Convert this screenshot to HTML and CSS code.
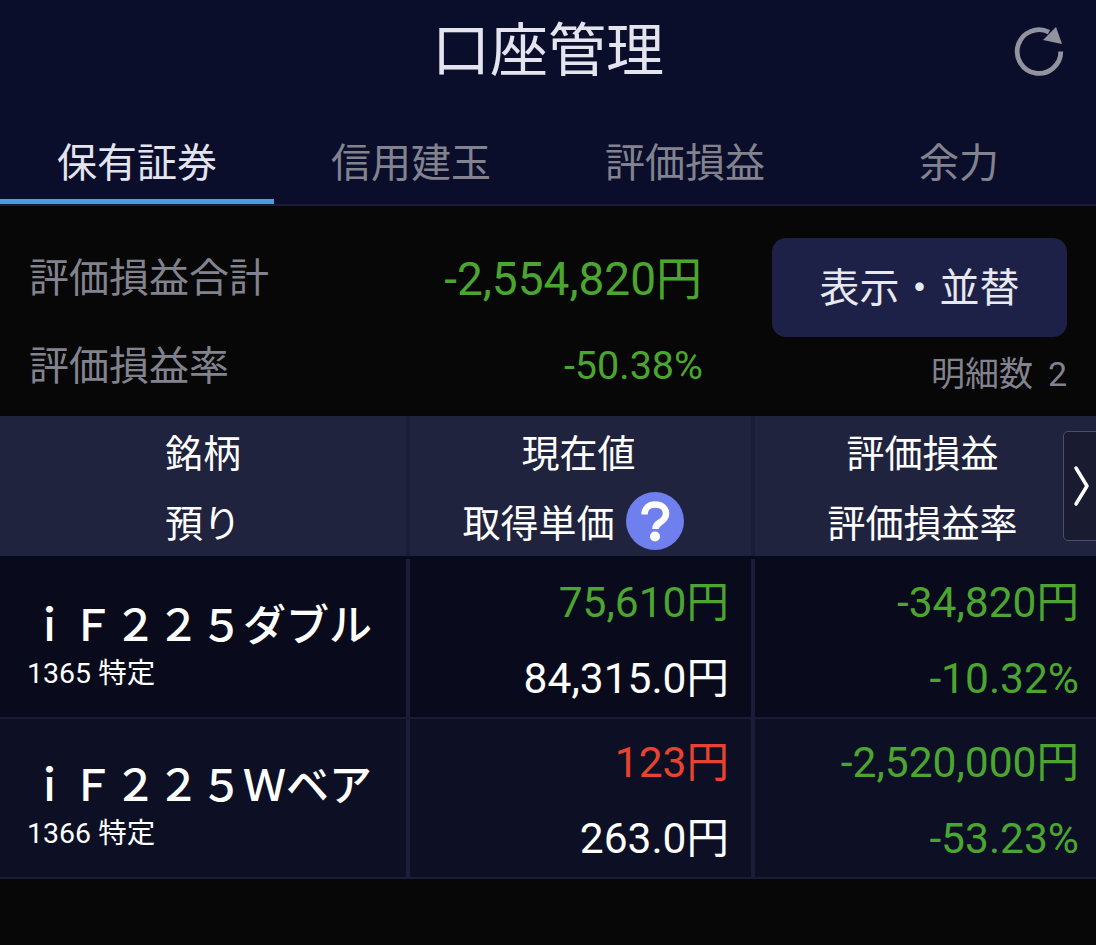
FILE: index.html
```html
<!DOCTYPE html>
<html lang="ja">

<head>
    <meta charset="UTF-8">
    <meta name="viewport" content="width=device-width, initial-scale=1.0">
    <title>口座管理</title>
    <link rel="stylesheet" href="styles.css">
</head>

<body>
    <!-- Header -->
    <header class="header">
        <h1 class="title">口座管理</h1>
        <svg class="reload" width="52" height="52" viewBox="0 0 52 52">
            <path d="M48.800 26.500A21.800 21.800 0 1 1 37 7.200" fill="none" stroke="#93939f" stroke-width="4.800" />
            <path d="M44 2L50 19L31 15Z" fill="#93939f" />
        </svg>
    </header>

    <!-- Tabs -->
    <nav class="tabs">
        <div class="tab active">保有証券</div>
        <div class="tab">信用建玉</div>
        <div class="tab">評価損益</div>
        <div class="tab">余力</div>
    </nav>

    <!-- Summary -->
    <section class="summary">
        <div class="totals">
            <div class="total-row">
                <span class="total-label">評価損益合計</span>
                <span class="total-value green">-2,554,820円</span>
            </div>
            <div class="total-row rate">
                <span class="total-label">評価損益率</span>
                <span class="total-rate green">-50.38%</span>
            </div>
        </div>
        <div class="actions">
            <button class="sort-button">表示・並替</button>
            <div class="count">明細数<span class="count-num">2</span></div>
        </div>
    </section>

    <!-- Table -->
    <div class="table-head">
        <div class="head-cell col-name">
            <div>銘柄</div>
            <div>預り</div>
        </div>
        <div class="head-cell col-price">
            <div class="price-label">現在値</div>
            <div class="with-help">取得単価
                <svg class="help" width="58" height="58" viewBox="0 0 58 58">
                    <circle cx="29" cy="29" r="29" fill="#6f80ee" />
                    <path d="M18.500 22.500C18.500 16 23 12.500 29 12.500C35.500 12.500 40 16 40 21.500C40 26 37.500 28 34.500 30C31.500 32 29.500 33 29.500 37" fill="none" stroke="#fff" stroke-width="6.500" />
                    <circle cx="29" cy="44.500" r="5" fill="#fff" />
                </svg>
            </div>
        </div>
        <div class="head-cell col-profit">
            <div>評価損益</div>
            <div>評価損益率</div>
        </div>
        <div class="next-tab">
            <svg width="18" height="42" viewBox="0 0 18 42">
                <path d="M4 3L15 21L4 39" fill="none" stroke="#fff" stroke-width="3.500" stroke-linecap="round" stroke-linejoin="round" />
            </svg>
        </div>
    </div>

    <div class="row first">
        <div class="col-name name-cell">
            <div class="stock-name">ｉＦ２２５ダブル</div>
            <div class="stock-code">1365 特定</div>
        </div>
        <div class="col-price num-cell">
            <div class="green">75,610円</div>
            <div>84,315.0円</div>
        </div>
        <div class="col-profit num-cell">
            <div class="green">-34,820円</div>
            <div class="green">-10.32%</div>
        </div>
    </div>

    <div class="row">
        <div class="col-name name-cell">
            <div class="stock-name">ｉＦ２２５Ｗベア</div>
            <div class="stock-code">1366 特定</div>
        </div>
        <div class="col-price num-cell">
            <div class="red">123円</div>
            <div>263.0円</div>
        </div>
        <div class="col-profit num-cell">
            <div class="green">-2,520,000円</div>
            <div class="green">-53.23%</div>
        </div>
    </div>
</body>

</html>
```

FILE: styles.css
```css
* {
    box-sizing: border-box;
}

html,
body {
    margin: 0;
    height: 945px;
    overflow: hidden;
}

body {
    background-color: #070707;
    color: #fff;
    font-family: Roboto, "Noto Sans CJK JP", sans-serif;
}

.green {
    color: #4ba62f;
}

.red {
    color: #e8432f;
}

/* Header */
.header {
    height: 125px;
    background-color: #0b0e2a;
    display: flex;
    align-items: center;
    justify-content: center;
    position: relative;
}

.title {
    margin: 0 0 34px;
    font-size: 58px;
    font-weight: 400;
    color: #e4e4ee;
}

.reload {
    position: absolute;
    top: 25px;
    right: 32px;
}

/* Tabs */
.tabs {
    height: 81px;
    background-color: #0b0e2a;
    border-bottom: 2px solid #1a1c38;
    display: flex;
}

.tab {
    flex: 1;
    font-size: 40px;
    color: #82838f;
    text-align: center;
    padding-top: 10px;
    line-height: 58px;
}

.tab.active {
    color: #e4e4ee;
    height: 79px;
    border-bottom: 5px solid #4a9de2;
}

/* Summary */
.summary {
    height: 210px;
    display: flex;
    padding: 32px 29px 0 29px;
    justify-content: space-between;
}

.totals {
    width: 673px;
}

.total-row {
    display: flex;
    justify-content: space-between;
    align-items: center;
    height: 74px;
    color: #82838f;
    font-size: 40px;
}

.total-row.rate {
    height: 102px;
}

.total-value {
    font-size: 46px;
}

.total-rate {
    margin: 4px -1px 0 0;
    font-size: 39.5px;
}

.actions {
    width: 295px;
    text-align: right;
}

.sort-button {
    display: block;
    width: 100%;
    height: 99px;
    border: none;
    border-radius: 14px;
    padding: 0 0 6px;
    background-color: #1e2147;
    color: #e8e8f0;
    font-family: inherit;
    font-size: 40px;
}

.count {
    margin-top: 10px;
    font-size: 34px;
    color: #82838f;
}

.count-num {
    margin-left: 15px;
}

/* Table */
.table-head,
.row {
    display: flex;
}

.table-head {
    height: 140px;
    background-color: #20233d;
    position: relative;
}

.col-name {
    width: 410px;
    border-right: 4px solid #1a1c38;
}

.col-price {
    width: 345px;
    border-right: 4px solid #1a1c38;
}

.col-profit {
    flex: 1;
}

.head-cell {
    padding-top: 3px;
    font-size: 38px;
    text-align: center;
    line-height: 70px;
}

.head-cell.col-profit {
    padding-right: 6px;
}

.price-label {
    padding-right: 4px;
}

.with-help {
    display: flex;
    align-items: center;
    justify-content: center;
    gap: 11px;
    padding-right: 15px;
}

.help {
    margin-top: -7px;
}

.next-tab {
    position: absolute;
    top: 15px;
    right: -8px;
    width: 41px;
    height: 110px;
    background-color: #191b30;
    border: 1px solid #4d4f66;
    border-radius: 5px;
    display: flex;
    align-items: center;
    padding-left: 8px;
}

.row {
    height: 160px;
    background-color: #0d1024;
    border-bottom: 2px solid #1a1c38;
}

.row.first {
    height: 163px;
    padding-top: 3px;
    background-color: #090b1c;
}

.name-cell {
    padding: 38px 0 0 28px;
}

.stock-name {
    font-size: 43px;
    font-weight: 500;
    line-height: 59px;
}

.stock-code {
    margin-left: -1px;
    font-size: 28.5px;
    line-height: 36px;
}

.num-cell {
    font-size: 42.5px;
    text-align: right;
    padding: 6px 22px 0 0;
    line-height: 76px;
}

.num-cell.col-profit {
    padding-right: 17px;
}
```
